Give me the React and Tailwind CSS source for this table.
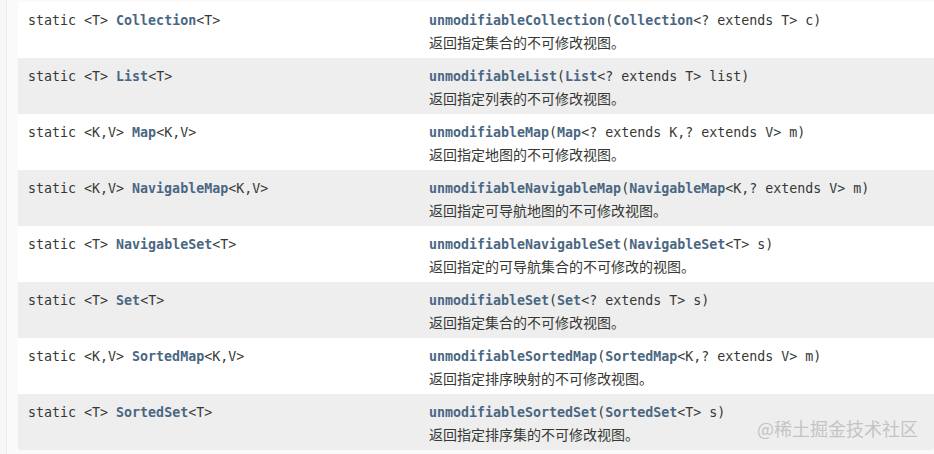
import React from 'react';

const rows = [
  { gen: '<T>', type: 'Collection', tail: '<T>', method: 'unmodifiableCollection', argType: 'Collection', args: '<? extends T> c)', desc: '返回指定集合的不可修改视图。' },
  { gen: '<T>', type: 'List', tail: '<T>', method: 'unmodifiableList', argType: 'List', args: '<? extends T> list)', desc: '返回指定列表的不可修改视图。' },
  { gen: '<K,V>', type: 'Map', tail: '<K,V>', method: 'unmodifiableMap', argType: 'Map', args: '<? extends K,? extends V> m)', desc: '返回指定地图的不可修改视图。' },
  { gen: '<K,V>', type: 'NavigableMap', tail: '<K,V>', method: 'unmodifiableNavigableMap', argType: 'NavigableMap', args: '<K,? extends V> m)', desc: '返回指定可导航地图的不可修改视图。' },
  { gen: '<T>', type: 'NavigableSet', tail: '<T>', method: 'unmodifiableNavigableSet', argType: 'NavigableSet', args: '<T> s)', desc: '返回指定的可导航集合的不可修改的视图。' },
  { gen: '<T>', type: 'Set', tail: '<T>', method: 'unmodifiableSet', argType: 'Set', args: '<? extends T> s)', desc: '返回指定集合的不可修改视图。' },
  { gen: '<K,V>', type: 'SortedMap', tail: '<K,V>', method: 'unmodifiableSortedMap', argType: 'SortedMap', args: '<K,? extends V> m)', desc: '返回指定排序映射的不可修改视图。' },
  { gen: '<T>', type: 'SortedSet', tail: '<T>', method: 'unmodifiableSortedSet', argType: 'SortedSet', args: '<T> s)', desc: '返回指定排序集的不可修改视图。' },
];

const mono = "font-['DejaVu_Sans_Mono',monospace] text-[13.3px] leading-[20px]";

export default function App() {
  return (
    <div className="relative w-[934px] h-[454px] overflow-hidden bg-[#f7f7f7] text-[#353833]">
      <div className="ml-[6px] h-full border-l border-[#ececec] bg-[#fafafa] pl-[11px] pt-[2px]">
        <div className="rounded-b-[3px] overflow-hidden">
          {rows.map((r, i) => (
            <div
              key={r.method}
              className={`flex h-[56px] pt-[9px] ${i % 2 === 0 ? 'bg-white' : 'bg-[#eeeeef]'}`}
            >
              <div className={`w-[411px] pl-[10px] ${mono}`}>
                static {r.gen} <span className="font-bold text-[#4a6782]">{r.type}</span>{r.tail}
              </div>
              <div className="flex flex-col">
                <div className={mono}>
                  <span className="font-bold text-[#4a6782]">{r.method}</span>(<span className="font-bold text-[#4a6782]">{r.argType}</span>{r.args}
                </div>
                <div className="font-['Noto_Sans_CJK_SC',sans-serif] text-[14px] leading-[23px]">
                  {r.desc}
                </div>
              </div>
            </div>
          ))}
        </div>
      </div>
      <div className="absolute left-[757px] top-[415px] font-['Noto_Sans_CJK_SC',sans-serif] text-[18px] leading-[26px] text-[#c4c4c4]">
        @稀土掘金技术社区
      </div>
    </div>
  );
}
